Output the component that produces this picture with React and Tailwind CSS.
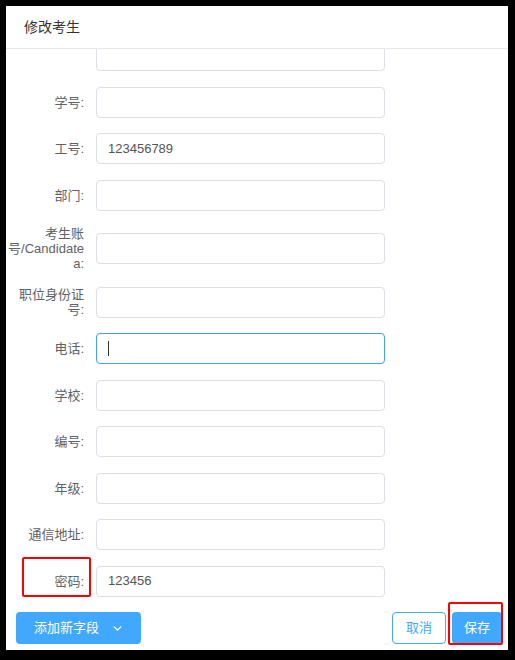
import { ChevronDown } from 'lucide-react'

// 修改考生 dialog: scrolled form body, footer with add-field / cancel / save.
const rows = [
  { label: '', value: '' },
  { label: '学号:', value: '' },
  { label: '工号:', value: '123456789' },
  { label: '部门:', value: '' },
  { label: '考生账号/Candidatea:', value: '' },
  { label: '职位身份证号:', value: '' },
  { label: '电话:', value: '', focused: true },
  { label: '学校:', value: '' },
  { label: '编号:', value: '' },
  { label: '年级:', value: '' },
  { label: '通信地址:', value: '' },
  { label: '密码:', value: '123456', marked: true },
]

function Row({ label, value, focused, marked }) {
  return (
    <div className="relative flex items-center">
      <div className="w-[78px] text-right text-[13px] leading-[15px] text-[#606266] [overflow-wrap:break-word]">
        {label}
      </div>
      <div
        className={
          'ml-[12px] flex h-[31px] w-[289px] items-center rounded-[4px] border bg-white pl-[11px] text-[13px] text-[#555] ' +
          (focused ? 'border-[#409eff]' : 'border-[#dcdfe6]')
        }
      >
        {focused ? <span className="h-[15px] w-px bg-[#333]" /> : value}
      </div>
      {marked && (
        <div className="pointer-events-none absolute left-[16px] top-[-9px] h-[40px] w-[69px] rounded-[2px] border-2 border-[#ff0000]" />
      )}
    </div>
  )
}

export default function App() {
  return (
    <div
      className="h-[660px] w-[515px] bg-black pb-[10px] pl-[6px] pr-[7px] pt-[6px]"
      style={{ fontFamily: '"Liberation Sans", "Noto Sans CJK SC", sans-serif' }}
    >
      <div className="flex h-full flex-col bg-white">
        <div className="flex h-[43px] shrink-0 items-center border-b border-[#e8e8e8] pl-[18px] text-[14px] text-[#333]">
          修改考生
        </div>

        <div className="h-[557px] shrink-0 overflow-hidden">
          <div className="-mt-[9px] flex flex-col gap-[15.5px]">
            {rows.map((r, i) => (
              <Row key={i} {...r} />
            ))}
          </div>
        </div>

        <div className="flex items-center justify-between pb-[6px] pl-[10px] pr-[6px] pt-[6px]">
          <button
            type="button"
            className="flex h-[32px] w-[125px] items-center rounded-[4px] bg-[#40a9ff] pl-[18px] text-[13px] text-white"
          >
            添加新字段
            <ChevronDown size={13} strokeWidth={2.5} className="ml-[12px]" />
          </button>
          <div className="flex gap-[6px]">
            <button
              type="button"
              className="h-[32px] w-[54px] rounded-[4px] border border-[#40a9ff] bg-white text-[13px] text-[#40a9ff]"
            >
              取消
            </button>
            <div className="relative">
              <button
                type="button"
                className="h-[32px] w-[50px] rounded-[4px] bg-[#40a9ff] text-[13px] text-white"
              >
                保存
              </button>
              <div className="pointer-events-none absolute left-[-4px] top-[-10px] h-[43px] w-[55px] rounded-[2px] border-2 border-[#ff0000]" />
            </div>
          </div>
        </div>
      </div>
    </div>
  )
}
